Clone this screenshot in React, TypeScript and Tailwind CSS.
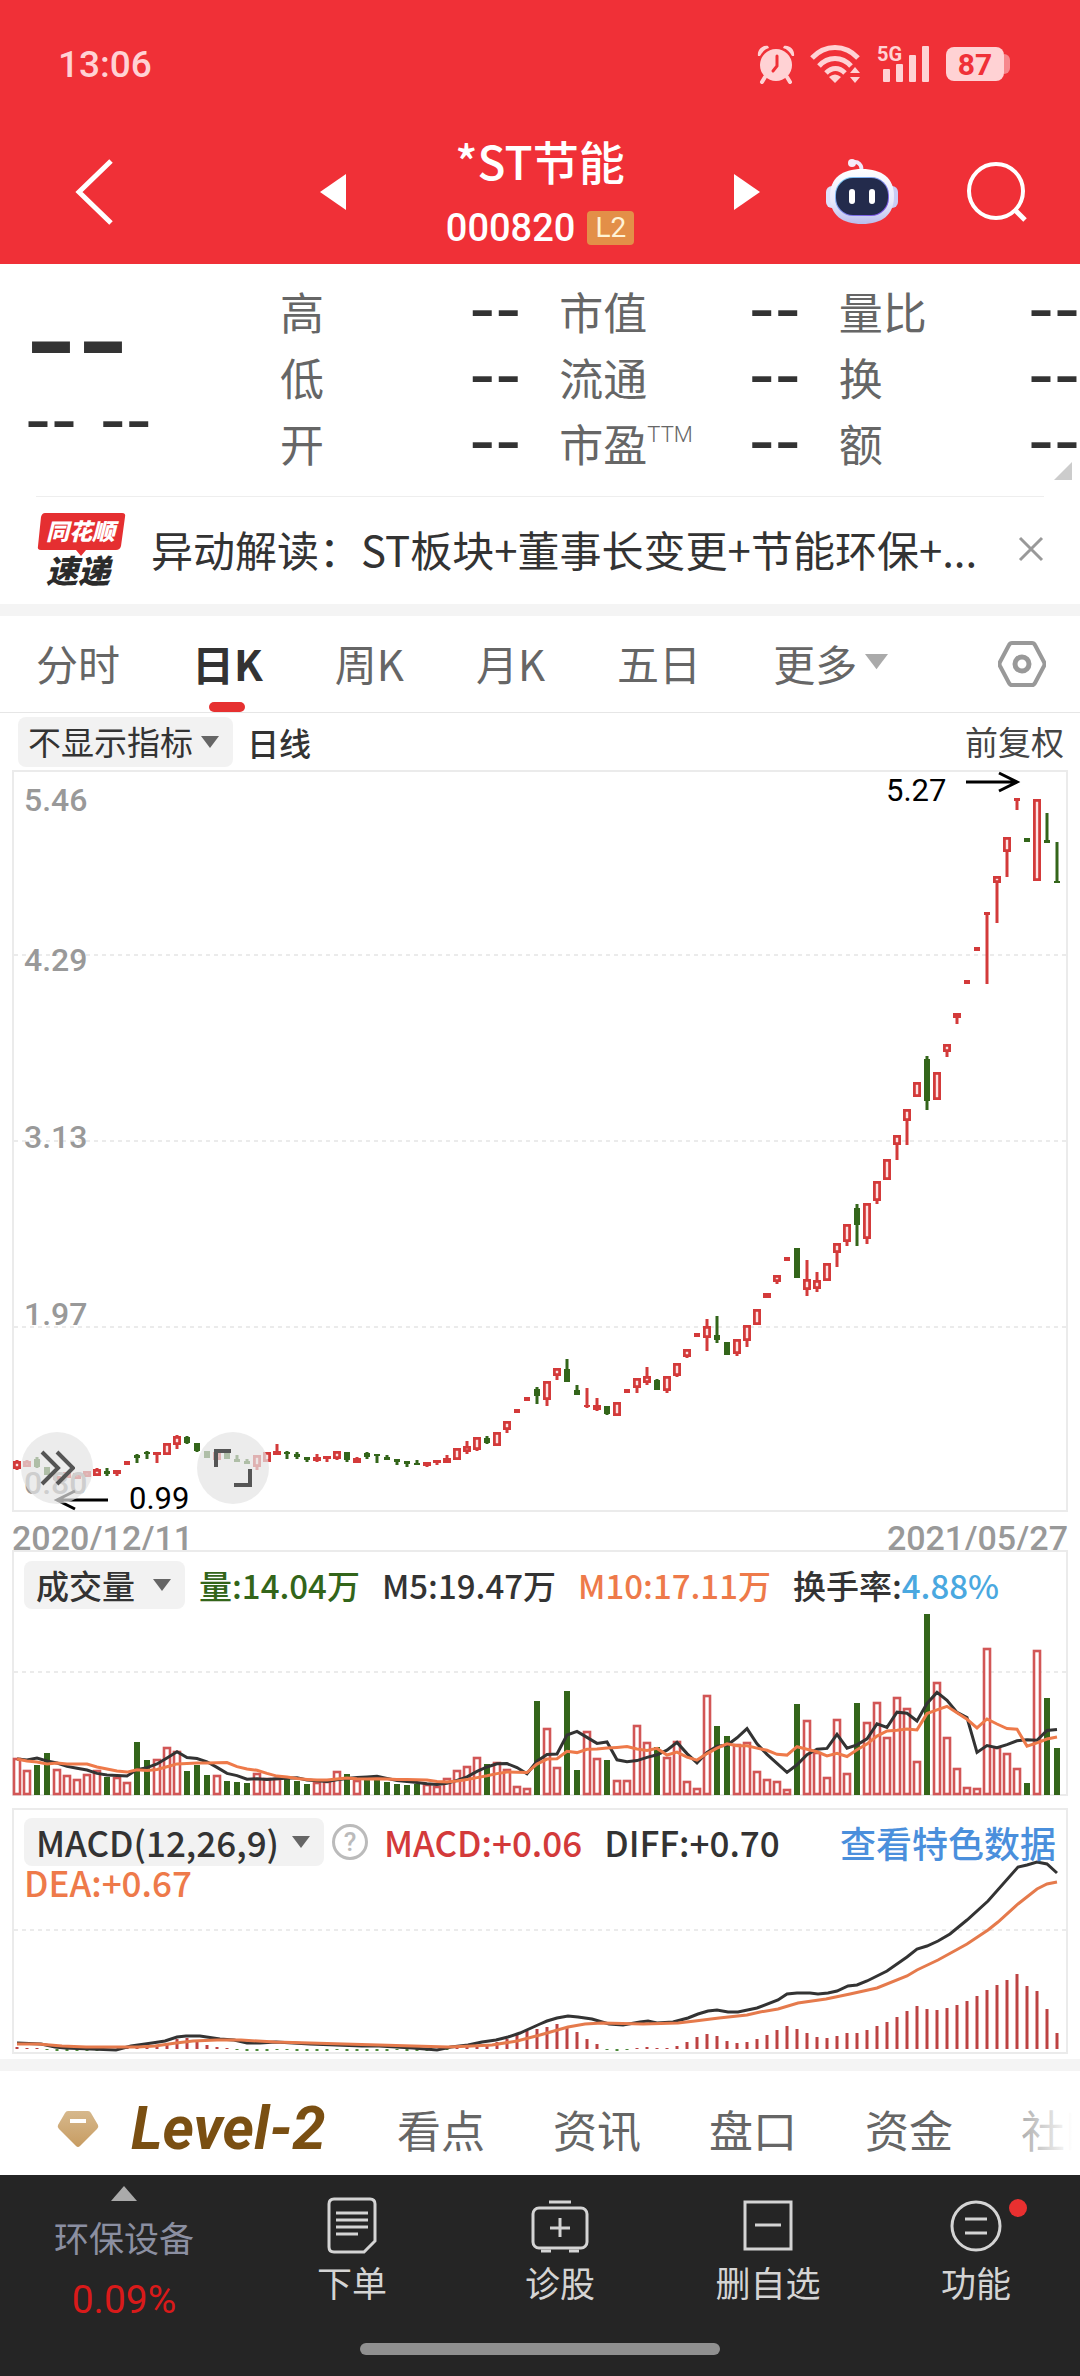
import type { ReactNode } from "react";

// r = hollow rising candle, g = falling candle, d = flat rising tick
type Kind = "r" | "g" | "d";
type Candle = [Kind, number, number, number, number];

// kind, high, body top, body bottom, low
const CANDLES: Candle[] = [
  ["r", 690, 691, 699, 700], ["r", 690, 691, 697, 697], ["g", 687, 689, 697, 698], ["g", 697, 697, 705, 705],
  ["r", 706, 706, 710, 714], ["r", 702, 702, 708, 708], ["r", 703, 703, 709, 709], ["r", 701, 701, 707, 707],
  ["r", 698, 699, 706, 706], ["g", 698, 701, 704, 706], ["r", 700, 700, 704, 706], ["d", 691, 691, 695, 695],
  ["g", 684, 685, 688, 693], ["g", 681, 682, 684, 689], ["r", 682, 682, 685, 693], ["r", 673, 673, 685, 685],
  ["r", 665, 666, 675, 679], ["g", 666, 667, 673, 674], ["g", 673, 673, 681, 682], ["g", 681, 681, 688, 688],
  ["r", 682, 682, 690, 690], ["g", 682, 682, 689, 689], ["g", 685, 689, 692, 692], ["g", 689, 691, 694, 694],
  ["r", 685, 685, 697, 700], ["r", 682, 682, 692, 692], ["r", 674, 681, 685, 685], ["g", 681, 682, 684, 689],
  ["g", 682, 684, 687, 689], ["g", 687, 687, 690, 692], ["r", 684, 687, 691, 692], ["r", 686, 686, 689, 692],
  ["r", 681, 681, 689, 690], ["g", 682, 682, 690, 692], ["r", 687, 688, 693, 693], ["g", 682, 683, 687, 689],
  ["g", 684, 684, 686, 693], ["g", 685, 687, 690, 690], ["g", 689, 689, 692, 695], ["g", 691, 691, 694, 697],
  ["g", 690, 693, 695, 695], ["r", 692, 692, 696, 697], ["r", 690, 690, 693, 695], ["r", 685, 688, 693, 693],
  ["r", 678, 678, 690, 690], ["r", 671, 676, 682, 684], ["r", 667, 667, 680, 681], ["g", 666, 668, 673, 674],
  ["r", 662, 662, 676, 676], ["r", 651, 651, 660, 663], ["d", 639, 639, 643, 643], ["d", 627, 627, 631, 631],
  ["g", 617, 619, 626, 634], ["r", 611, 611, 630, 636], ["r", 598, 598, 606, 610], ["g", 589, 599, 612, 612],
  ["g", 615, 620, 625, 625], ["d", 618, 635, 637, 638], ["r", 628, 635, 640, 641], ["g", 636, 636, 644, 645],
  ["r", 632, 632, 646, 646], ["d", 619, 619, 623, 623], ["r", 608, 608, 618, 623], ["r", 597, 606, 613, 615],
  ["g", 609, 610, 620, 620], ["r", 606, 606, 621, 623], ["r", 593, 593, 606, 607], ["r", 579, 579, 587, 588],
  ["d", 563, 563, 567, 567], ["r", 549, 556, 568, 581], ["g", 546, 565, 570, 573], ["g", 572, 572, 585, 585],
  ["r", 569, 569, 584, 586], ["r", 555, 555, 571, 577], ["r", 539, 539, 555, 555], ["r", 523, 523, 528, 528],
  ["r", 505, 505, 512, 514], ["d", 487, 487, 491, 491], ["g", 478, 478, 508, 508], ["r", 490, 509, 520, 526],
  ["r", 502, 510, 519, 522], ["r", 493, 493, 511, 511], ["r", 473, 473, 483, 497], ["r", 454, 454, 472, 476],
  ["g", 434, 438, 455, 476], ["r", 433, 433, 469, 474], ["r", 411, 411, 431, 434], ["r", 389, 389, 410, 410],
  ["r", 365, 365, 375, 390], ["r", 339, 339, 351, 375], ["r", 312, 312, 327, 327], ["g", 286, 289, 331, 340],
  ["r", 302, 302, 330, 330], ["r", 274, 274, 282, 287], ["r", 243, 243, 248, 254], ["d", 210, 210, 214, 214],
  ["d", 177, 177, 181, 181], ["d", 142, 142, 145, 214], ["r", 106, 106, 113, 153], ["r", 67, 67, 82, 107],
  ["d", 28, 28, 31, 40], ["g", 68, 68, 72, 72], ["r", 29, 29, 111, 111], ["g", 43, 70, 73, 73],
  ["g", 72, 111, 113, 113],
];

const VOLUMES = [
  37, 25, 30, 42, 26, 20, 16, 21, 25, 18, 18, 13, 53, 35, 36, 48, 44, 24, 30, 20, 20, 14, 13, 12, 22, 17, 17,
  16, 14, 11, 13, 14, 24, 21, 15, 16, 18, 13, 11, 10, 11, 11, 9, 17, 25, 29, 38, 31, 33, 26, 9, 7, 94, 67, 28,
  104, 25, 64, 37, 35, 15, 15, 70, 53, 48, 38, 54, 14, 7, 100, 69, 59, 51, 53, 24, 16, 14, 6, 91, 75, 43, 18,
  76, 22, 92, 73, 93, 58, 98, 87, 34, 181, 113, 58, 27, 8, 7, 147, 48, 42, 27, 12, 145, 97, 47,
];

const MACD = [
  2, 1, 1, -1, -2, -2, -2, -2, -2, -2, -1, 1, 2, 3, 4, 5, 10, 11, 7, 4, 2, 1, -1, -2, -2, -2, -1, -1, -2, -2,
  -2, -2, -1, -2, -2, -2, -2, -2, -1, -2, -2, -2, -2, -1, 1, 2, 3, 5, 7, 10, 14, 18, 20, 22, 25, 22, 17, 10, 5,
  -1, -2, -1, 1, 2, 1, 1, 3, 7, 12, 15, 13, 8, 6, 7, 10, 14, 19, 23, 20, 16, 12, 11, 13, 16, 16, 19, 23, 27,
  32, 38, 43, 40, 39, 41, 44, 48, 53, 59, 64, 69, 75, 63, 58, 40, 16,
];

const DIFF_LINE =
  "5,235 29,236 43,239 53,240 104,242 119,238 140,235 153,233 165,229 174,228 188,228 208,231 222,232 235,235 248,235 264,234 298,236 350,238 367,238 401,240 425,242 439,239 456,237 470,234 484,232 496,229 508,225 528,216 535,213 545,210 556,208 566,209 580,211 597,216 611,217 628,214 636,213 645,215 661,214 676,210 686,206 696,203 705,202 716,204 726,204 745,200 766,192 775,186 785,185 798,185 806,186 816,185 825,183 836,178 845,177 855,173 875,163 895,149 905,141 915,138 926,133 938,126 955,112 976,93 1006,59 1015,57 1025,54 1035,56 1045,65";
const DEA_LINE =
  "5,236 26,236 50,238 74,239 105,239 126,239 143,238 164,235 181,233 205,232 229,232 263,234 298,235 332,236 367,237 401,238 436,239 460,238 480,237 505,233 528,227 535,225 556,219 573,216 590,215 631,216 666,215 683,213 707,210 735,207 748,204 766,201 786,195 814,191 838,186 865,180 895,168 905,162 926,152 946,141 955,136 976,122 986,114 1006,96 1025,81 1035,76 1045,74";

const RED = "#d33a3a";
const GREEN = "#33651a";
const x = (i: number) => 5 + i * 10;

// moving average of the bars; the first values come from days left of the window
function average(span: number, seed: number[]) {
  return VOLUMES.map((_, i) => {
    const value =
      i < seed.length ? seed[i] : VOLUMES.slice(i - span + 1, i + 1).reduce((a, b) => a + b, 0) / span;
    return `${x(i)},${245 - value}`;
  }).join(" ");
}

function Frame({ height, lines }: { height: number; lines: number[] }) {
  return (
    <g stroke="#ebebeb" strokeWidth={2} fill="none">
      <rect x={1} y={1} width={1054} height={height - 2} />
      {lines.map((y) => (
        <path key={y} d={`M2 ${y}H1054`} strokeDasharray="4 4" />
      ))}
    </g>
  );
}

function PriceChart() {
  return (
    <svg viewBox="0 0 1056 742" className="block w-full h-auto overflow-visible" role="img" aria-label="日K线图">
      <Frame height={742} lines={[185, 371, 557]} />
      {CANDLES.map(([kind, high, top, bottom, low], i) => {
        const color = kind === "g" ? GREEN : RED;
        const hollow = kind === "r" && bottom - top > 4;
        return (
          <g key={i} fill={color}>
            {top > high && <rect x={x(i) - 1.5} y={high} width={3} height={top - high} />}
            {low > bottom && <rect x={x(i) - 1.5} y={bottom} width={3} height={low - bottom} />}
            {hollow ? (
              <rect
                x={x(i) - 2.6}
                y={top + 1.4}
                width={5.2}
                height={bottom - top - 2.8}
                fill="#fde4e4"
                stroke={color}
                strokeWidth={2.8}
              />
            ) : kind === "r" ? (
              <rect x={x(i) - 4} y={top} width={8} height={bottom - top} />
            ) : (
              <rect x={x(i) - 3} y={top} width={6} height={bottom - top} />
            )}
          </g>
        );
      })}
      <g className="font-['Roboto',sans-serif] text-[32px] font-medium" fill="#999">
        <text x={12} y={41}>5.46</text>
        <text x={12} y={201}>4.29</text>
        <text x={12} y={378}>3.13</text>
        <text x={12} y={555}>1.97</text>
        <text x={12} y={724}>0.80</text>
      </g>
      <g className="font-['Roboto',sans-serif] text-[31px]">
        <text x={874} y={31}>5.27</text>
        <text x={117} y={739}>0.99</text>
      </g>
      <g stroke="#000" strokeWidth={3} fill="none">
        <path d="M954 12H1004M987 3L1005 12L987 21" />
        <path d="M96 730H46M63 721L45 730L63 739" />
      </g>
    </svg>
  );
}

function VolumeChart() {
  return (
    <svg viewBox="0 0 1056 246" className="block w-full h-auto" role="img" aria-label="成交量">
      <Frame height={246} lines={[122]} />
      {VOLUMES.map((v, i) =>
        CANDLES[i][0] === "g" ? (
          <rect key={i} x={x(i) - 3} y={245 - v} width={6} height={v} fill={GREEN} />
        ) : (
          <rect key={i} x={x(i) - 3} y={246 - v} width={6} height={v - 2} fill="#fff" stroke="#d25656" strokeWidth={2.6} />
        )
      )}
      <polyline points={average(5, [36, 35, 37, 34])} fill="none" stroke="#333" strokeWidth={3} />
      <polyline
        points={average(10, [36, 34, 33, 31, 32, 31, 31, 31, 28])}
        fill="none"
        stroke="#ee7a4a"
        strokeWidth={3}
      />
    </svg>
  );
}

function MacdChart() {
  return (
    <svg viewBox="0 0 1056 246" className="block w-full h-auto" role="img" aria-label="MACD">
      <Frame height={246} lines={[122]} />
      {MACD.map((v, i) => (
        <rect
          key={i}
          x={x(i) - 1.5}
          y={v > 0 ? 241 - v : 241}
          width={3}
          height={Math.abs(v)}
          fill={v > 0 ? "#bd4242" : "#4d8a3a"}
        />
      ))}
      <polyline points={DIFF_LINE} fill="none" stroke="#333" strokeWidth={3} />
      <polyline points={DEA_LINE} fill="none" stroke="#e57a4c" strokeWidth={3} />
    </svg>
  );
}

function Down({ className }: { className: string }) {
  return (
    <svg viewBox="0 0 18 12" className={className} fill="currentColor" aria-hidden="true">
      <path d="M0 0H18L9 12Z" />
    </svg>
  );
}

function Picker({ label, value, className }: { label: string; value: string; className: string }) {
  return (
    <label className="relative block shrink-0">
      <select
        aria-label={label}
        className={`block appearance-none rounded-lg bg-[#f2f2f2] text-[#333] ${className}`}
      >
        <option>{value}</option>
      </select>
      <Down className="absolute right-3.5 top-1/2 w-[18px] -translate-y-1/2 text-[#666] pointer-events-none" />
    </label>
  );
}

function StatusBar() {
  return (
    <div className="flex h-[120px] items-center justify-between pt-2 pl-[58px] pr-[70px] text-[#ffd2d4]">
      <span className="font-['Roboto',sans-serif] text-[37px] leading-none font-medium">13:06</span>
      <div className="flex items-center gap-[15px]">
        {/* Alarm */}
        <svg width="38" height="40" viewBox="0 0 38 40" fill="currentColor">
          <circle cx="19" cy="21" r="16" />
          <path d="M1 12C0 6 5 1 11 2L12 4C8 5 5 8 3 12ZM37 12C38 6 33 1 27 2L26 4C30 5 33 8 35 12Z" />
          <path d="M8 33L5 38M30 33L33 38" stroke="currentColor" strokeWidth="4" strokeLinecap="round" />
          <path d="M20 12V22L16 27" fill="none" stroke="#f03037" strokeWidth="3" strokeLinecap="round" />
        </svg>
        {/* Wi-Fi */}
        <svg width="52" height="40" viewBox="0 0 52 40" fill="none" stroke="currentColor" strokeWidth="5">
          <path d="M2 14C15 0 35 0 48 14" />
          <path d="M9 22C18 12 32 12 41 22" />
          <path d="M16 29C22 23 29 23 35 29" />
          <path d="M19 33Q25 28 31 33L25 39Z" fill="currentColor" stroke="none" />
          <path d="M40 29L45 23L50 29ZM40 33L45 39L50 33Z" fill="currentColor" stroke="none" />
        </svg>
        {/* Signal */}
        <svg width="54" height="40" viewBox="0 0 54 40" fill="currentColor" className="overflow-visible">
          <text x="0" y="17" className="font-['Roboto',sans-serif] text-[20px] font-bold">5G</text>
          <rect x="6" y="25" width="7" height="13" rx="1" />
          <rect x="19" y="20" width="7" height="18" rx="1" />
          <rect x="32" y="11" width="7" height="27" rx="1" />
          <rect x="45" y="2" width="7" height="36" rx="1" />
        </svg>
        <div className="flex items-center">
          <span className="flex h-[34px] w-[58px] items-center justify-center rounded-lg bg-[#ffd2d4] font-['Roboto',sans-serif] text-[30px] font-bold text-[#f03037]">
            87
          </span>
          <span className="h-5 w-[6px] rounded-r-md bg-[#f7878c]" />
        </div>
      </div>
    </div>
  );
}

function Robot() {
  return (
    <svg width="72" height="68" viewBox="0 0 72 68">
      <defs>
        <linearGradient id="head" x1="0" y1="0" x2="0" y2="1">
          <stop offset="0" stopColor="#ffffff" />
          <stop offset="0.6" stopColor="#e8e9fb" />
          <stop offset="1" stopColor="#b9bdec" />
        </linearGradient>
        <linearGradient id="visor" x1="0" y1="0" x2="1" y2="1">
          <stop offset="0" stopColor="#7fd8f5" />
          <stop offset="1" stopColor="#7a3fe0" />
        </linearGradient>
      </defs>
      <path d="M25 5C32 2 37 7 35 15" fill="none" stroke="#f1e9fa" strokeWidth="4" strokeLinecap="round" />
      <circle cx="26" cy="5" r="4" fill="#f6ecf8" />
      <rect x="0" y="28" width="12" height="22" rx="6" fill="#dfe1fa" />
      <rect x="60" y="28" width="12" height="22" rx="6" fill="#c9ccf4" />
      <path d="M36 11C56 11 68 20 68 38C68 57 56 66 36 66C16 66 4 57 4 38C4 20 16 11 36 11Z" fill="url(#head)" />
      <rect x="9" y="19" width="54" height="39" rx="18" fill="url(#visor)" />
      <rect x="10" y="20" width="52" height="37" rx="17" fill="#232b4c" />
      <rect x="23" y="31" width="6" height="15" rx="3" fill="#fff" />
      <rect x="43" y="31" width="6" height="15" rx="3" fill="#fff" />
    </svg>
  );
}

function Header() {
  return (
    <header className="bg-[#f03037] text-white">
      <StatusBar />
      <div className="grid h-[144px] grid-cols-[1fr_440px_1fr] items-center">
        <button aria-label="返回" className="ml-[74px] w-10">
          <svg width="40" height="66" viewBox="0 0 40 66" fill="none" stroke="currentColor" strokeWidth="5">
            <path d="M37 2L5 33L37 64" />
          </svg>
        </button>
        <div className="flex items-center justify-between">
          <button aria-label="上一只">
            <svg width="26" height="36" viewBox="0 0 26 36" fill="currentColor"><path d="M26 0V36L0 18Z" /></svg>
          </button>
          <div className="pt-2 text-center">
            <h1 className="text-[46px] leading-[64px] font-medium">*ST节能</h1>
            <p className="flex items-center justify-center gap-3 leading-[72px]">
              <span className="font-['Roboto',sans-serif] text-[38px] font-medium">000820</span>
              <span className="rounded-sm bg-[#e38f48] px-2 font-['Roboto',sans-serif] text-[28px] leading-[34px] text-[#fff3d6]">
                L2
              </span>
            </p>
          </div>
          <button aria-label="下一只">
            <svg width="26" height="36" viewBox="0 0 26 36" fill="currentColor"><path d="M0 0V36L26 18Z" /></svg>
          </button>
        </div>
        <div className="flex items-center justify-end gap-[68px] pr-[52px]">
          <button aria-label="智能助手"><Robot /></button>
          <button aria-label="搜索">
            <svg width="62" height="62" viewBox="0 0 62 62" fill="none" stroke="currentColor" strokeWidth="4">
              <circle cx="30" cy="30" r="27" />
              <path d="M49 49L59 59" strokeWidth="5" />
            </svg>
          </button>
        </div>
      </div>
    </header>
  );
}

const QUOTES: [string, string?][] = [
  ["高"], ["市值"], ["量比"],
  ["低"], ["流通"], ["换"],
  ["开"], ["市盈", "TTM"], ["额"],
];

function Quotes() {
  return (
    <section className="relative flex pt-3.5 pb-5">
      <div className="w-[280px] pl-[25px] pt-[18px] font-['DejaVu_Sans',sans-serif] text-[#333]">
        <p className="text-[144px] leading-[82px]">--</p>
        <p className="text-[72px] leading-[82px] whitespace-pre">-- --</p>
      </div>
      <dl className="grid flex-1 grid-cols-3 gap-x-[38px]">
        {QUOTES.map(([name, note]) => (
          <div key={name} className="flex h-[66px] items-start justify-between text-[44px] leading-[66px]">
            <dt className="flex text-[#666] whitespace-nowrap">
              {name}
              {note && <sup className="top-0 font-['Roboto',sans-serif] text-[22px] leading-[50px] font-light">{note}</sup>}
            </dt>
            <dd className="font-['DejaVu_Sans',sans-serif] text-[72px] leading-[60px] text-[#333]">--</dd>
          </div>
        ))}
      </dl>
      <svg viewBox="0 0 18 18" className="absolute right-2 bottom-4 w-[18px]" fill="#ccc">
        <path d="M18 0V18H0Z" />
      </svg>
    </section>
  );
}

function News() {
  return (
    <section className="mx-9 flex h-[108px] items-center border-t border-[#eee] pb-1">
      <svg width="90" height="74" viewBox="0 0 90 74" className="shrink-0 overflow-visible">
        <path d="M9 1H86Q90 1 89 5L85 34Q84 38 80 38H50L45 44L40 38H5Q1 38 2 34L5 5Q6 1 9 1Z" fill="#e52f31" />
        <text x="10" y="28" className="text-[23px] font-black italic" fill="#fff">同花顺</text>
        <text x="10" y="71" className="text-[32px] font-black italic" fill="#2b2b2b">速递</text>
      </svg>
      <a href="#news" className="ml-[25px] flex-1 truncate text-[42px] leading-[60px] text-[#333]">
        异动解读：ST板块+董事长变更+节能环保+...
      </a>
      <button aria-label="关闭" className="text-[#999]">
        <svg width="26" height="26" viewBox="0 0 26 26" stroke="currentColor" strokeWidth="3">
          <path d="M2 2L24 24M24 2L2 24" />
        </svg>
      </button>
    </section>
  );
}

const PERIODS = ["分时", "日K", "周K", "月K", "五日"];

function Periods() {
  return (
    <nav className="flex h-[97px] items-center justify-between border-b border-[#e6e6e6] pr-[34px] pl-9 text-[42px] text-[#666]">
      <div className="flex h-full gap-[72px]">
        {PERIODS.map((name) =>
          name === "日K" ? (
            <button key={name} className="relative h-full pb-1 font-bold text-[#333]">
              {name}
              <span className="absolute bottom-0 left-1/2 h-2.5 w-9 -translate-x-1/2 rounded-full bg-[#e63030]" />
            </button>
          ) : (
            <button key={name} className="h-full pb-1">{name}</button>
          )
        )}
        <button className="flex h-full items-center gap-2 pb-1">
          更多
          <Down className="w-[23px] text-[#aaa]" />
        </button>
      </div>
      <button aria-label="设置" className="text-[#999]">
        <svg width="48" height="48" viewBox="0 0 48 48" fill="none" stroke="currentColor" strokeWidth="4">
          <path d="M14 3H34Q36 3 37 5L46 22Q47 24 46 26L37 43Q36 45 34 45H14Q12 45 11 43L2 26Q1 24 2 22L11 5Q12 3 14 3Z" />
          <circle cx="24" cy="24" r="7" strokeWidth="5" />
        </svg>
      </button>
    </nav>
  );
}

function PricePanel() {
  return (
    <section>
      <div className="flex h-[57px] items-center pr-4 pl-[18px] text-[33px] text-[#333]">
        <Picker label="指标" value="不显示指标" className="h-[50px] pr-10 pl-2.5" />
        <span className="ml-3.5 text-[32px] font-medium">日线</span>
        <button className="ml-auto text-[#444]">前复权</button>
      </div>
      <div className="relative mx-3">
        <PriceChart />
        <button
          aria-label="快进"
          className="absolute bottom-2 left-[9px] flex size-[72px] items-center justify-center rounded-full bg-[#e4e4e4]/70 text-[#555]"
        >
          <svg width="36" height="36" viewBox="0 0 36 36" fill="none" stroke="currentColor" strokeWidth="4">
            <path d="M3 2L19 18L3 34M18 2L34 18L18 34" />
          </svg>
        </button>
        <button
          aria-label="全屏"
          className="absolute bottom-2 left-[185px] flex size-[72px] items-center justify-center rounded-full bg-[#e4e4e4]/70 text-[#555]"
        >
          <svg width="38" height="38" viewBox="0 0 38 38" fill="none" stroke="currentColor" strokeWidth="4">
            <path d="M2 18V2H17M36 20V36H20" />
          </svg>
        </button>
      </div>
      <div className="mx-3 flex h-[38px] justify-between font-['Roboto',sans-serif] text-[34px] leading-[52px] font-medium text-[#999]">
        <time>2020/12/11</time>
        <time>2021/05/27</time>
      </div>
    </section>
  );
}

function VolumePanel() {
  return (
    <section className="relative mx-3 mb-3">
      <VolumeChart />
      <div className="absolute inset-x-3 top-[11px] flex items-center gap-[22px] text-[33px] leading-[48px] font-medium whitespace-nowrap text-[#333]">
        <Picker label="副图" value="成交量" className="h-12 pr-[50px] pl-3" />
        <span className="-ml-2 text-[#33651a]">量:14.04万</span>
        <span>M5:19.47万</span>
        <span className="text-[#ee7a4a]">M10:17.11万</span>
        <span>换手率:<span className="text-[#4aa8e0]">4.88%</span></span>
      </div>
    </section>
  );
}

function MacdPanel() {
  return (
    <section className="relative mx-3 mb-[5px]">
      <MacdChart />
      <div className="absolute inset-x-3 top-2.5 text-[35px] font-medium text-[#333]">
        <div className="flex h-12 items-center whitespace-nowrap">
          <Picker label="副图" value="MACD(12,26,9)" className="h-12 pr-11 pl-3 leading-[46px]" />
          <button
            aria-label="说明"
            className="ml-2 flex size-9 items-center justify-center rounded-full border-[3px] border-[#bbb] font-['Roboto',sans-serif] text-[26px] leading-none text-[#bbb]"
          >
            ?
          </button>
          <span className="ml-4 text-[#d33a3a]">MACD:+0.06</span>
          <span className="ml-[22px]">DIFF:+0.70</span>
          <a href="#data" className="ml-auto text-[36px] text-[#4a8fdc]">查看特色数据</a>
        </div>
        <p className="leading-[32px] text-[#ee7a4a]">DEA:+0.67</p>
      </div>
    </section>
  );
}

function Sections() {
  return (
    <nav className="relative flex h-[104px] items-center overflow-hidden pt-3 pl-[57px] text-[44px] whitespace-nowrap text-[#666]">
      <svg width="42" height="38" viewBox="0 0 42 38" className="shrink-0">
        <defs>
          <linearGradient id="gem" x1="0" y1="0" x2="0" y2="1">
            <stop offset="0" stopColor="#d6b88c" />
            <stop offset="1" stopColor="#c79c62" />
          </linearGradient>
        </defs>
        <path d="M11 1H31Q33 1 34 3L41 15Q42 17 40 19L23 36Q21 38 19 36L2 19Q0 17 1 15L8 3Q9 1 11 1Z" fill="url(#gem)" />
        <rect x="13" y="9" width="16" height="4" fill="#fff" />
      </svg>
      <a href="#level2" className="ml-8 w-[200px] shrink-0 font-['Roboto',sans-serif] text-[60px] leading-[70px] font-bold text-[#7a4f12] italic">
        Level-2
      </a>
      <div className="ml-[66px] flex gap-[68px]">
        <a href="#view">看点</a>
        <a href="#info">资讯</a>
        <a href="#board">盘口</a>
        <a href="#money">资金</a>
        <a href="#community">社区</a>
      </div>
      <span className="absolute inset-y-0 right-0 w-[76px] bg-linear-to-r from-white/30 to-white to-90%" />
    </nav>
  );
}

function NavItem({ name, dot, children }: { name: string; dot?: boolean; children: ReactNode }) {
  return (
    <button className="relative flex flex-1 flex-col items-center pt-[19px] text-[35px] leading-[48px] text-[#d4d4d4]">
      <svg width="64" height="64" viewBox="0 0 64 64" fill="none" stroke="currentColor" strokeWidth="3">
        {children}
      </svg>
      {name}
      {dot && <span className="absolute top-6 left-[137px] size-[18px] rounded-full bg-[#e93030]" />}
    </button>
  );
}

function BottomNav() {
  return (
    <footer className="bg-[#252525] pb-[21px]">
      <div className="flex h-[168px]">
        <button className="flex w-[248px] flex-col items-center pt-[11px]">
          <svg width="26" height="15" viewBox="0 0 26 15" fill="#aaa"><path d="M13 0L26 15H0Z" /></svg>
          <span className="mt-3 text-[35px] leading-[48px] text-[#8b8fa1]">环保设备</span>
          <span className="mt-4 font-['Roboto',sans-serif] text-[39px] leading-[46px] text-[#d91a1a]">0.09%</span>
        </button>
        <NavItem name="下单">
          <path d="M14 5H50Q55 5 55 10V47L44 58H14Q9 58 9 53V10Q9 5 14 5Z" />
          <path d="M16 19H48M16 26H48M16 33H48M16 40H38" />
        </NavItem>
        <NavItem name="诊股">
          <path d="M21 8H43M32 24V43M22 34H42" />
          <rect x="5" y="14" width="54" height="40" rx="6" />
          <path d="M13 57H23M41 57H51" />
        </NavItem>
        <NavItem name="删自选">
          <rect x="9" y="8" width="46" height="47" />
          <path d="M19 31H45" />
        </NavItem>
        <NavItem name="功能" dot>
          <circle cx="32" cy="32" r="24" />
          <path d="M21 25H43M21 39H43" />
        </NavItem>
      </div>
      <div className="mx-auto h-3 w-1/3 rounded-full bg-[#909090]" />
    </footer>
  );
}

export default function App() {
  return (
    <div className="w-full bg-white font-['Noto_Sans_CJK_SC',sans-serif]">
      <Header />
      <Quotes />
      <News />
      <div className="h-3 bg-[#f4f4f4]" />
      <Periods />
      <PricePanel />
      <VolumePanel />
      <MacdPanel />
      <div className="h-3 bg-[#f4f4f4]" />
      <Sections />
      <BottomNav />
    </div>
  );
}
